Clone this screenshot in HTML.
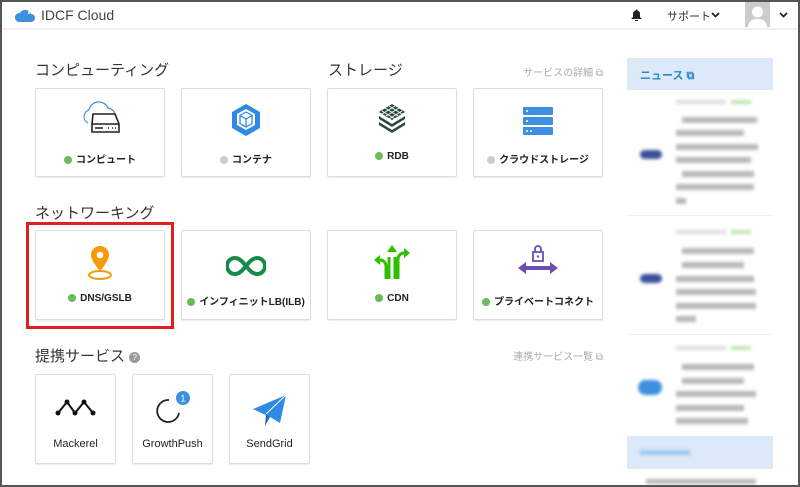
<!DOCTYPE html>
<html><head><meta charset="utf-8"><style>
*{margin:0;padding:0;box-sizing:border-box}
body{width:800px;height:487px;overflow:hidden;background:#fff;font-family:"Liberation Sans","Noto Sans CJK JP",sans-serif;position:relative;color:#333}
.frame{position:absolute;left:0;top:0;width:800px;height:487px;border:2px solid #555;pointer-events:none;z-index:9}
.hdr{position:absolute;left:0;top:0;width:800px;height:30px;border-bottom:2px solid #f0f0f0}
.abs{position:absolute}
.card{position:absolute;border:1px solid #ddd;border-radius:2px;background:#fff;box-shadow:0 1px 1px rgba(0,0,0,.08)}
.lbl{position:absolute;left:0;right:0;text-align:center;font-size:10px;font-weight:bold;color:#222;white-space:nowrap}
.dot{display:inline-block;width:8px;height:8px;border-radius:50%;background:#6cbb5a;margin-right:4px;vertical-align:-1px}
.g{background:#ccc}
.h{position:absolute;font-size:15px;color:#333}
.link{position:absolute;font-size:10px;color:#aaa;text-align:right;white-space:nowrap}
.ic{position:absolute;left:50%;transform:translateX(-50%)}
.bl{filter:blur(1.6px);position:absolute;background:#b8b8b8;height:6px}
</style></head><body>
<div class="hdr"></div>
<svg class="abs" style="left:15px;top:6px" width="20" height="17" viewBox="0 0 20 17"><path d="M4 16h12a4 4 0 0 0 0-8 6 6 0 0 0-11-1 4.5 4.5 0 0 0-1 9z" fill="#3d8fe0"/><path d="M14 8V3" stroke="#fff" stroke-width="1.5"/></svg>
<div class="abs" style="left:41px;top:7px;font-size:14px;color:#444">IDCF Cloud</div>
<svg class="abs" style="left:631px;top:9px" width="11" height="12" viewBox="0 0 11 12"><path d="M5.5 0.5a1 1 0 0 1 1 1a3.5 3.5 0 0 1 2.5 3.5v3l1.5 1.5v.5h-10v-.5l1.5-1.5v-3a3.5 3.5 0 0 1 2.5-3.5a1 1 0 0 1 1-1z M4 11h3a1.5 1.5 0 0 1-3 0z" fill="#222"/></svg>
<div class="abs" style="left:667px;top:8px;font-size:11px;color:#333">サポート</div>
<svg class="abs" style="left:711px;top:12px" width="9" height="6"><path d="M1 1l3.5 3.5L8 1" stroke="#222" stroke-width="1.8" fill="none"/></svg>
<div class="abs" style="left:745px;top:2px;width:25px;height:25px;background:#ccc;overflow:hidden"><svg width="25" height="25"><circle cx="12.5" cy="10" r="5.5" fill="#fff"/><path d="M3 25c1-7 5-8 9.5-8s8.5 1 9.5 8z" fill="#fff"/></svg></div>
<svg class="abs" style="left:779px;top:12px" width="9" height="6"><path d="M1 1l3.5 3.5L8 1" stroke="#222" stroke-width="1.8" fill="none"/></svg>

<div class="h" style="left:35px;top:59px">コンピューティング</div>
<div class="h" style="left:328px;top:59px">ストレージ</div>
<div class="link" style="right:197px;top:64px">サービスの詳細 ⧉</div>

<div class="card" style="left:35px;top:88px;width:130px;height:89px">
<svg class="ic" style="top:12px" width="42" height="34" viewBox="0 0 42 34"><path d="M9 22a7 7 0 0 1 1-13 10 10 0 0 1 19-2 8 8 0 0 1 7 6" stroke="#3d8fe0" stroke-width="1.2" fill="none"/><path d="M14 13h22l4 10v8H13v-8z" fill="#fff" stroke="#222" stroke-width="1.6"/><path d="M13 23h27" stroke="#222" stroke-width="1.6"/><path d="M16 27h8M29 27h1M33 27h1M36 27h1" stroke="#222" stroke-width="1.6"/></svg>
<div class="lbl" style="top:62px"><span class="dot"></span>コンピュート</div></div>
<div class="card" style="left:181px;top:88px;width:130px;height:89px">
<svg class="ic" style="top:14px" width="32" height="34" viewBox="0 0 32 34"><path d="M16 1l14 8v16l-14 8-14-8V9z" fill="#2f8ae5"/><path d="M16 6l9 5v11l-9 5-9-5V11z" fill="#fff"/><path d="M16 9l6 3.5v8L16 24l-6-3.5v-8z M10 12.5l6 3.5 6-3.5M16 16v8" stroke="#2f8ae5" stroke-width="1.3" fill="none"/></svg>
<div class="lbl" style="top:62px"><span class="dot g"></span>コンテナ</div></div>
<div class="card" style="left:327px;top:88px;width:130px;height:89px">
<svg class="ic" style="top:14px" width="30" height="32" viewBox="0 0 30 32"><g fill="#2a4a3e"><path d="M15 1l13 8-13 8-13-8z"/><path d="M2 13l13 8 13-8v3l-13 8-13-8z"/><path d="M2 19l13 8 13-8v3l-13 8-13-8z"/></g><path d="M8 5l13 8M12 3l13 8M5 8l13 8M22 5L9 13M18 3L5 11M25 8l-13 8" stroke="#fff" stroke-width=".8"/></svg>
<div class="lbl" style="top:62px"><span class="dot"></span>RDB</div></div>
<div class="card" style="left:473px;top:88px;width:130px;height:89px">
<svg class="ic" style="top:18px" width="30" height="28" viewBox="0 0 30 28"><g fill="#3d8fe0"><rect x="0" y="0" width="30" height="8" rx="1"/><rect x="0" y="10" width="30" height="8" rx="1"/><rect x="0" y="20" width="30" height="8" rx="1"/></g><g fill="#fff"><circle cx="4" cy="4" r="1"/><circle cx="4" cy="14" r="1"/><circle cx="4" cy="24" r="1"/><circle cx="8" cy="24" r="1"/></g></svg>
<div class="lbl" style="top:62px"><span class="dot g"></span>クラウドストレージ</div></div>

<div class="h" style="left:35px;top:202px">ネットワーキング</div>
<div class="abs" style="left:26px;top:222px;width:148px;height:107px;border:3px solid #e02020"></div>
<div class="card" style="left:35px;top:230px;width:130px;height:90px">
<svg class="ic" style="top:14px" width="28" height="36" viewBox="0 0 28 36"><path d="M14 1a9 9 0 0 1 9 9c0 6-9 16-9 16S5 16 5 10a9 9 0 0 1 9-9z" fill="#f79a0a"/><circle cx="14" cy="10" r="3.3" fill="#fff"/><ellipse cx="14" cy="30" rx="11" ry="4" fill="none" stroke="#f79a0a" stroke-width="2"/></svg>
<div class="lbl" style="top:62px"><span class="dot"></span>DNS/GSLB</div></div>
<div class="card" style="left:181px;top:230px;width:130px;height:90px">
<svg class="ic" style="top:24px" width="40" height="22" viewBox="0 0 40 22"><path d="M20 11c-4-5-7-8-11-8a8 8 0 0 0 0 16c4 0 7-3 11-8s7-8 11-8a8 8 0 0 1 0 16c-4 0-7-3-11-8z" fill="none" stroke="#158a4a" stroke-width="4"/></svg>
<div class="lbl" style="top:62px"><span class="dot"></span>インフィニットLB(ILB)</div></div>
<div class="card" style="left:327px;top:230px;width:130px;height:90px">
<svg class="ic" style="top:12px" width="38" height="38" viewBox="0 0 38 38"><g stroke="#2ec000" stroke-width="3" fill="none"><path d="M16 36V14M22 36V14M13 36V23a6 6 0 0 0-6-6H4M25 36V16a6 6 0 0 1 6-6h3"/></g><g fill="#2ec000"><path d="M19 2l5 7H14z"/><path d="M1 17l6-5v10z"/><path d="M37 10l-6-5v10z"/></g></svg>
<div class="lbl" style="top:62px"><span class="dot"></span>CDN</div></div>
<div class="card" style="left:473px;top:230px;width:130px;height:90px">
<svg class="ic" style="top:14px" width="42" height="32" viewBox="0 0 42 32"><rect x="16" y="7" width="10" height="9" fill="none" stroke="#6a4fb0" stroke-width="1.8"/><path d="M18 7V4a3 3 0 0 1 6 0v3" fill="none" stroke="#6a4fb0" stroke-width="1.8"/><circle cx="21" cy="11.5" r="1.2" fill="#6a4fb0"/><path d="M1 23l8-6v4h24v-4l8 6-8 6v-4H9v4z" fill="#6a4fb0"/></svg>
<div class="lbl" style="top:62px"><span class="dot"></span>プライベートコネクト</div></div>

<div class="h" style="left:35px;top:345px">提携サービス <span style="display:inline-block;width:11px;height:11px;border-radius:50%;background:#999;color:#fff;font-size:8px;text-align:center;line-height:11px;vertical-align:1px">?</span></div>
<div class="link" style="right:197px;top:348px">連携サービス一覧 ⧉</div>

<div class="card" style="left:35px;top:374px;width:81px;height:90px">
<svg class="ic" style="top:22px" width="42" height="20" viewBox="0 0 42 20"><path d="M3 16l9-11 8 11 9-11 9 11" stroke="#111" stroke-width="2" fill="none"/><g fill="#111"><circle cx="3" cy="16" r="2.5"/><circle cx="12" cy="5" r="2.5"/><circle cx="20" cy="16" r="2.5"/><circle cx="29" cy="5" r="2.5"/><circle cx="38" cy="16" r="2.5"/></g></svg>
<div class="lbl" style="top:63px;font-weight:normal;font-size:11px">Mackerel</div></div>
<div class="card" style="left:132px;top:374px;width:81px;height:90px">
<svg class="ic" style="top:14px" width="36" height="36" viewBox="0 0 36 36"><path d="M24 22a11 11 0 1 1-10-13" stroke="#222" stroke-width="1.8" fill="none" transform="translate(0,2)"/><circle cx="28" cy="9" r="7" fill="#3d8fe0"/><text x="28" y="12.5" font-size="9" fill="#fff" text-anchor="middle" font-family="Liberation Sans">1</text></svg>
<div class="lbl" style="top:63px;font-weight:normal;font-size:11px">GrowthPush</div></div>
<div class="card" style="left:229px;top:374px;width:81px;height:90px">
<svg class="ic" style="top:18px" width="36" height="36" viewBox="0 0 36 36"><path d="M1 16L34 2 28 30 18 24z" fill="#2f8ae5"/><path d="M18 24l-5 9 1-12z" fill="#1c6cc0"/><path d="M14 21L34 2" stroke="#fff" stroke-width="1"/></svg>
<div class="lbl" style="top:63px;font-weight:normal;font-size:11px">SendGrid</div></div>

<div class="abs" style="left:627px;top:58px;width:146px;height:32px;background:#dbe9f8;border-radius:2px"></div>
<div class="abs" style="left:640px;top:67px;font-size:11px;font-weight:bold;color:#2f86c8">ニュース ⧉</div>

<div class="bl" style="left:676px;top:100px;width:50px;height:4px;background:#ddd"></div>
<div class="bl" style="left:731px;top:100px;width:20px;height:4px;background:#bfe6b0"></div>
<div class="bl" style="left:682px;top:117px;width:75px"></div>
<div class="bl" style="left:676px;top:130px;width:68px"></div>
<div class="bl" style="left:676px;top:144px;width:82px"></div>
<div class="bl" style="left:676px;top:157px;width:75px"></div>
<div class="bl" style="left:682px;top:171px;width:72px"></div>
<div class="bl" style="left:676px;top:184px;width:78px"></div>
<div class="bl" style="left:676px;top:198px;width:10px"></div>
<div class="bl" style="left:640px;top:150px;width:22px;height:9px;background:#3a4f9a;border-radius:5px"></div>
<div class="abs" style="left:628px;top:215px;width:144px;height:1px;background:#eee"></div>
<div class="bl" style="left:676px;top:230px;width:50px;height:4px;background:#ddd"></div>
<div class="bl" style="left:731px;top:230px;width:20px;height:4px;background:#bfe6b0"></div>
<div class="bl" style="left:682px;top:248px;width:72px"></div>
<div class="bl" style="left:682px;top:262px;width:62px"></div>
<div class="bl" style="left:676px;top:276px;width:78px"></div>
<div class="bl" style="left:676px;top:289px;width:80px"></div>
<div class="bl" style="left:676px;top:303px;width:80px"></div>
<div class="bl" style="left:676px;top:316px;width:20px"></div>
<div class="bl" style="left:640px;top:274px;width:22px;height:9px;background:#3a4f9a;border-radius:5px"></div>
<div class="abs" style="left:628px;top:334px;width:144px;height:1px;background:#eee"></div>
<div class="bl" style="left:676px;top:346px;width:50px;height:4px;background:#ddd"></div>
<div class="bl" style="left:731px;top:346px;width:20px;height:4px;background:#bfe6b0"></div>
<div class="bl" style="left:682px;top:364px;width:72px"></div>
<div class="bl" style="left:682px;top:378px;width:62px"></div>
<div class="bl" style="left:676px;top:391px;width:80px"></div>
<div class="bl" style="left:676px;top:405px;width:68px"></div>
<div class="bl" style="left:676px;top:418px;width:72px"></div>
<div class="bl" style="left:638px;top:380px;width:24px;height:15px;background:#3d8fe0;border-radius:8px"></div>
<div class="abs" style="left:627px;top:436px;width:146px;height:33px;background:#dbe9f8"></div>
<div class="bl" style="left:640px;top:450px;width:50px;height:5px;background:#9cc7ee"></div>
<div class="bl" style="left:646px;top:479px;width:110px;height:5px"></div>
<div class="frame"></div>
</body></html>
